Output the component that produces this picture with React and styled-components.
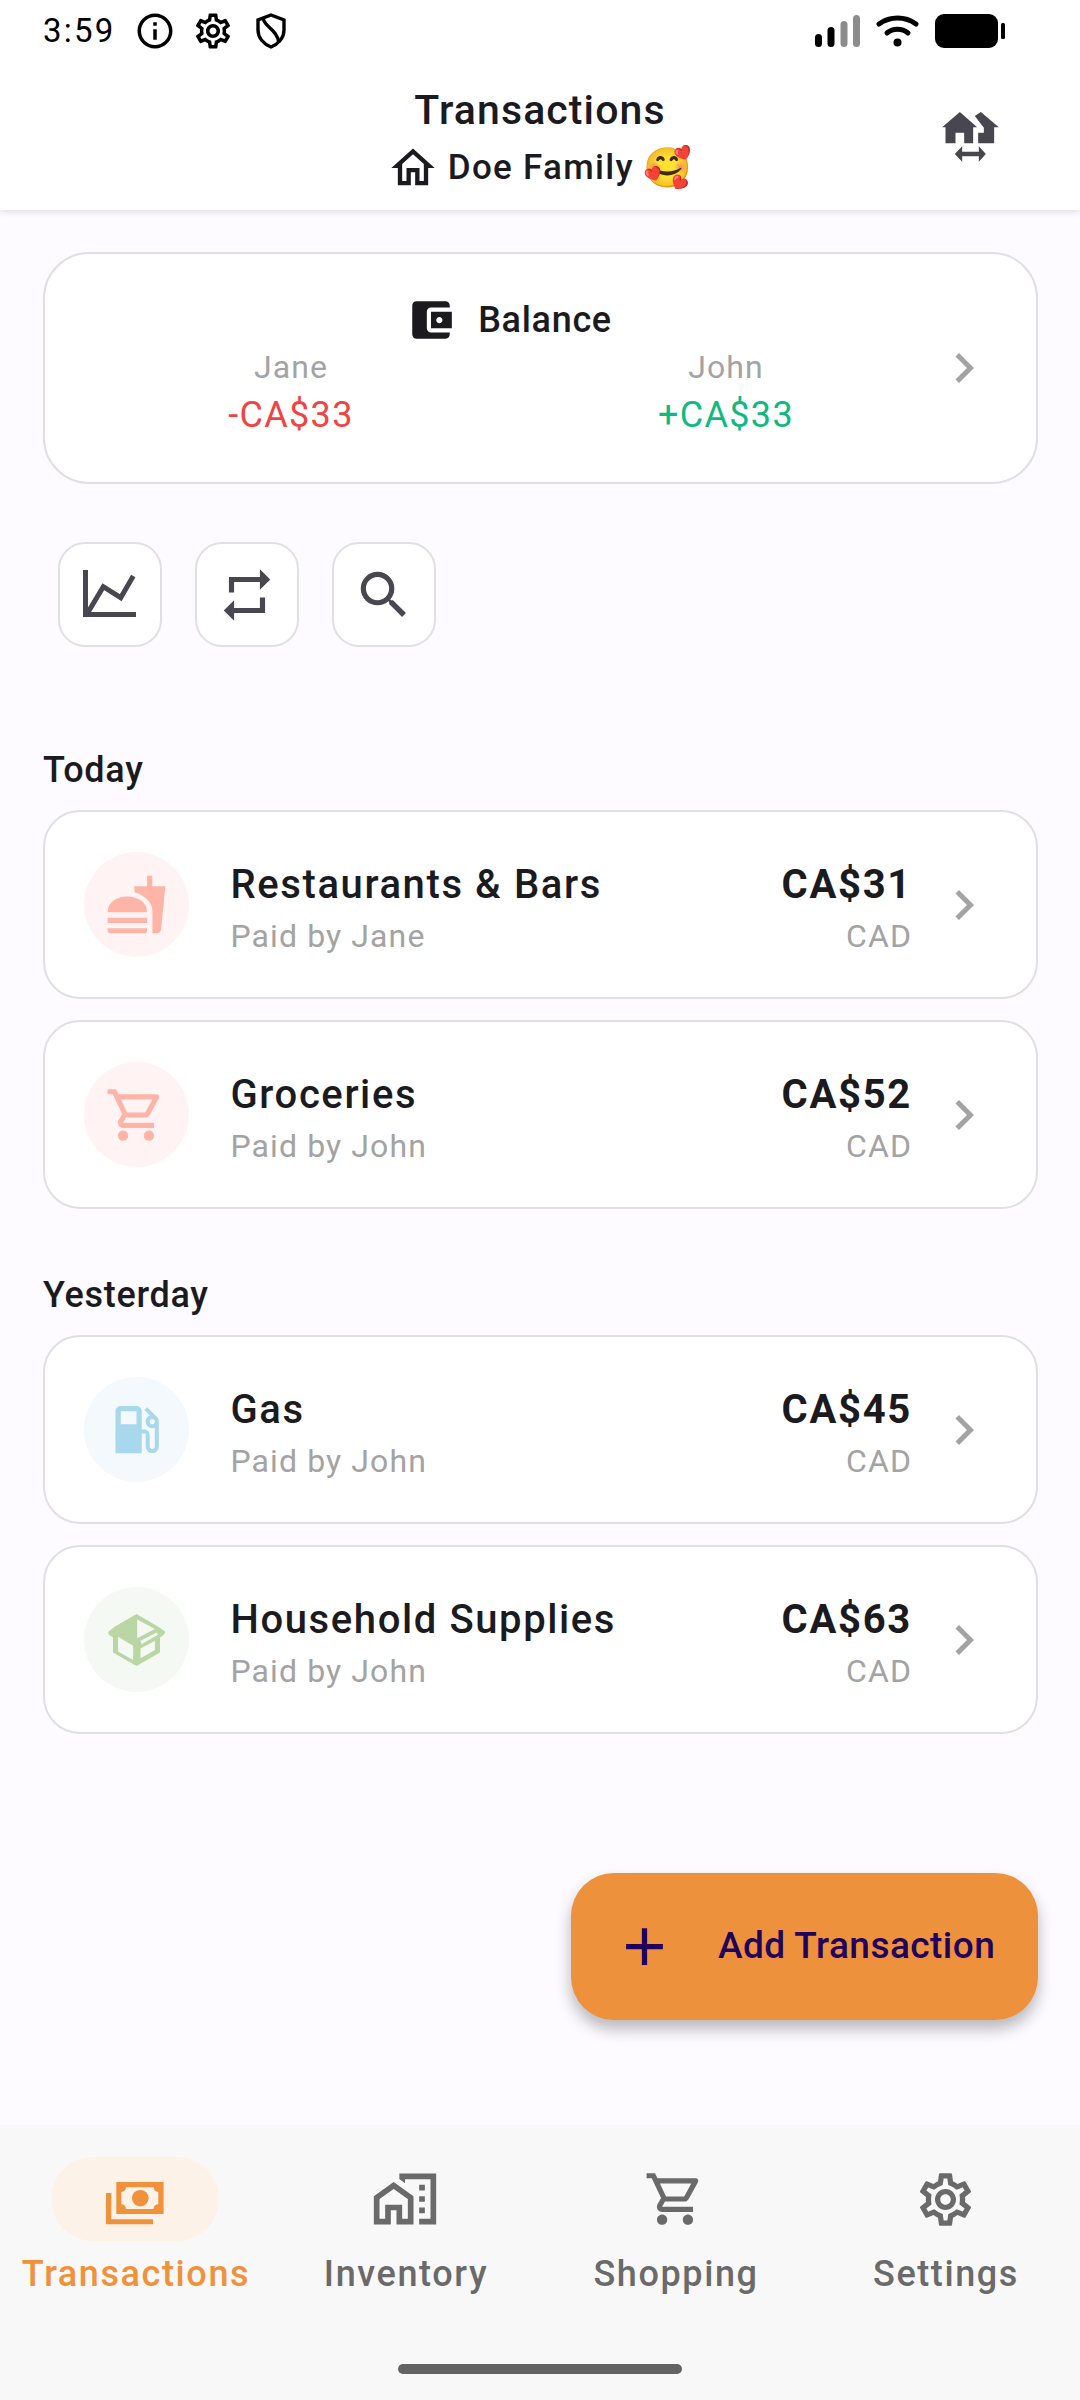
import React from "react";
import styled, { createGlobalStyle } from "styled-components";
import {
  MdAccountBalanceWallet, MdChevronRight, MdRepeat, MdSearch, MdFastfood,
  MdOutlineShoppingCart, MdLocalGasStation, MdOutlineHomeWork, MdOutlineSettings,
  MdOutlineHome, MdOutlineInfo, MdAdd,
} from "react-icons/md";

const Global = createGlobalStyle`
  html, body { margin: 0; padding: 0; background: #fdfbff; }
  * { box-sizing: border-box; }
  body { font-family: Roboto, "Noto Sans", sans-serif; }
`;

const Phone = styled.div`
  width: 1080px; height: 2400px; display: flex; flex-direction: column;
  position: relative; overflow: hidden; background: #fdfbff; color: #1b1b1f;
`;
const TopArea = styled.header`
  height: 210px; background: #fff; box-shadow: 0 2px 6px rgba(0,0,0,.12);
  display: flex; flex-direction: column; position: relative; z-index: 1;
`;
const StatusBar = styled.div`
  height: 62px; padding: 13px 75px 0 43px; display: flex; align-items: flex-start;
  justify-content: space-between; color: #000;
`;
const StatusGroup = styled.div`
  display: flex; align-items: center; gap: 16px; height: 36px;
`;
const Clock = styled.span`
  font-size: 33px; letter-spacing: 2.2px; margin-right: 3px; line-height: 36px;
`;
const TitleRow = styled.div`
  flex: 1; display: flex; align-items: flex-start; justify-content: center; position: relative;
`;
const TitleBlock = styled.div`
  display: flex; flex-direction: column; align-items: center; padding-top: 24.5px;
`;
const Title = styled.div`
  font-size: 41px; line-height: 46px; letter-spacing: 1.1px; font-weight: 470;
`;
const Family = styled.div`
  display: flex; align-items: center; font-size: 35px; font-weight: 470; line-height: 46px;
  letter-spacing: 1.3px; margin-top: 9px; gap: 9px;
`;
const Emoji = styled.span`
  font-size: 39px; line-height: 46px;
`;
const SwapButton = styled.div`
  position: absolute; right: 80px; top: 45px; width: 60px; height: 60px;
  display: flex; align-items: center; justify-content: center; color: #48464f;
`;
const Main = styled.main`
  flex: 1; padding: 42px 42px 0 43px; display: flex; flex-direction: column;
`;
const BalanceCard = styled.div`
  height: 232px; padding-top: 41px; position: relative; border-radius: 46px;
  background: #fff; border: 2.5px solid #e0e0e2;
`;
const BalanceHead = styled.div`
  display: flex; align-items: center; justify-content: center; gap: 22px;
  font-size: 36px; font-weight: 470; line-height: 48px; padding-right: 63px; letter-spacing: .7px;
`;
const BalanceCols = styled.div`
  display: grid; grid-template-columns: 290px 290px; column-gap: 145px;
  padding-left: 101px; margin-top: 2px;
`;
const BalanceCol = styled.div`
  display: flex; flex-direction: column; align-items: center;
`;
const PersonName = styled.div`
  font-size: 32px; line-height: 40px; color: #a3a3a3; letter-spacing: 1.1px;
`;
const Amount = styled.div`
  font-size: 36px; line-height: 48px; margin-top: 4px; color: ${p => p.$color}; letter-spacing: 1.3px;
`;
const Chevron = styled.div`
  position: absolute; right: 42px; top: 50%; transform: translateY(-50%);
  color: #a3a3a3; display: flex;
`;
const Tools = styled.div`
  display: flex; gap: 33px; margin: 58px 0 0 15px;
`;
const ToolButton = styled.div`
  width: 104px; height: 105px; background: #fff; border: 2.5px solid #e0e0e2; border-radius: 27px;
  display: flex; align-items: center; justify-content: center; color: #48464f;
`;
const SectionLabel = styled.div`
  font-size: 36px; font-weight: 470; line-height: 46px; letter-spacing: .7px;
  margin-top: ${p => p.$top}px; margin-bottom: 17.5px;
`;
const RowList = styled.div`
  display: flex; flex-direction: column; gap: 21px;
`;
const Row = styled.div`
  height: 189px; display: flex; align-items: center; padding-left: 38.5px; position: relative;
  background: #fff; border: 2.5px solid #e0e0e2; border-radius: 37px;
`;
const IconCircle = styled.div`
  width: 105px; height: 105px; border-radius: 50%; flex: none; background: ${p => p.$bg};
  color: ${p => p.$fg}; display: flex; align-items: center; justify-content: center;
`;
const RowText = styled.div`
  margin-left: 42px; flex: 1; display: flex; flex-direction: column; padding-top: 6px;
`;
const RowTitle = styled.div`
  font-size: 40px; font-weight: 470; line-height: 50px; letter-spacing: 1.6px;
`;
const RowSub = styled.div`
  font-size: 32px; line-height: 40px; color: #a3a3a3; letter-spacing: 1.1px; margin-top: 6px;
`;
const RowAmount = styled.div`
  display: flex; flex-direction: column; align-items: flex-end; margin-right: 124px; padding-top: 6px;
`;
const Price = styled.div`
  font-size: 40px; font-weight: 700; line-height: 50px; letter-spacing: 1.7px;
`;
const Currency = styled.div`
  font-size: 32px; line-height: 40px; color: #a3a3a3; letter-spacing: 1.1px; margin-top: 6px;
`;
const Fab = styled.div`
  position: absolute; left: 571px; top: 1873px; width: 467px; height: 147px; border-radius: 43px;
  background: #ee913c; color: #21005d; display: flex; align-items: center; padding-left: 42px;
  box-shadow: 0 9px 16px rgba(0,0,0,.28); z-index: 2;
`;
const FabLabel = styled.span`
  font-size: 37px; font-weight: 470; margin-left: 42px; letter-spacing: .45px; padding-bottom: 3px;
`;
const NavBar = styled.nav`
  height: 275px; background: #f8f8f8; display: grid; grid-template-columns: repeat(4, 270px);
  position: relative;
`;
const NavItem = styled.div`
  display: flex; flex-direction: column; align-items: center; padding-top: 32px;
  color: ${p => p.$active ? "#f0913c" : "#6a6a6a"};
`;
const NavIconPill = styled.div`
  width: 168px; height: 84px; border-radius: 42px; display: flex; align-items: center;
  justify-content: center; background: ${p => p.$active ? "#fdf2e7" : "transparent"};
`;
const NavLabel = styled.div`
  font-size: 36px; font-weight: 470; line-height: 46px; letter-spacing: 1.6px; margin-top: 10px;
  padding-left: 2px;
`;
const HomeBar = styled.div`
  position: absolute; left: 398px; top: 239px; width: 284px; height: 10px; border-radius: 5px;
  background: #636363;
`;

const ChartIcon = () => (
  <svg width="56" height="56" viewBox="0 0 56 56" fill="none" stroke="currentColor" strokeWidth="5">
    <path d="M3.5 3V47.5H54" />
    <path d="M5 47 L21.3 19.7 L38.7 30.7 L51.3 9" />
  </svg>
);
const SwapHomes = () => (
  <svg width="57" height="50" viewBox="487 338 170 150" fill="currentColor">
    <path d="M540 338 L592 384 H580 V432 H553 V400 H527 V432 H497 V384 H487 Z" />
    <path d="M595 400 H612 V385 L585 350 L603 338 L657 384 H643 V432 H595 Z" />
    <path d="M525 464 L547 441 V457 H597 V441 L618 464 L597 487 V471 H547 V487 Z" />
  </svg>
);
const ShieldIcon = () => (
  <svg width="42" height="36" viewBox="-6 0 42 36" fill="none" stroke="#000" strokeWidth="3.4">
    <path d="M15 2 L28 7 V17 C28 25 22 31 15 34 C8 31 2 25 2 17 V7Z" />
    <path d="M7 5 C9 15 21 16 23 30" />
  </svg>
);
const SignalIcon = () => (
  <svg width="45" height="32" viewBox="0 0 45 32">
    <rect x="0" y="19" width="7" height="13" rx="3.5" fill="#000" />
    <rect x="12.5" y="12" width="7" height="20" rx="3.5" fill="#000" />
    <rect x="25.5" y="6" width="7" height="26" rx="3.5" fill="#8c8c8c" />
    <rect x="38" y="0" width="7" height="32" rx="3.5" fill="#8c8c8c" />
  </svg>
);
const WifiIcon = () => (
  <svg width="43" height="32" viewBox="0 0 43 32" fill="none" stroke="#000" strokeWidth="5" strokeLinecap="round">
    <path d="M3 9 C14 1 29 1 40 9" />
    <path d="M11 18 C17 13 26 13 32 18" />
    <circle cx="21.5" cy="27.5" r="4" fill="#000" stroke="none" />
  </svg>
);
const BatteryIcon = () => (
  <svg width="70" height="34" viewBox="0 0 70 34">
    <rect x="0" y="0" width="63" height="34" rx="9" fill="#000" />
    <rect x="66" y="9" width="4" height="16" rx="1.5" fill="#000" />
  </svg>
);
const CashIcon = () => (
  <svg width="58" height="60" viewBox="0 -13 58 60" fill="currentColor">
    <path fillRule="evenodd" d="M10.3 0H57.6V32H10.3Z M20 5.3 H47.6 C47.6 8 49.6 10 52.3 10 V22.3 C49.6 22.3 47.6 24.3 47.6 27 H20 C20 24.3 18 22.3 15.3 22.3 V10 C18 10 20 8 20 5.3Z" />
    <circle cx="34.3" cy="16.2" r="8.3" />
    <path d="M0 11H5.3V37.3H47V42.3H0Z" />
  </svg>
);
const BoxIcon = () => (
  <svg width="57" height="52" viewBox="25 40 170 155" fill="currentColor">
    <path fillRule="evenodd" d="M110 40 L175 78 L195 92 Q197 97 190 103 L180 110 V155 L110 195 L40 155 V110 L30 103 Q23 97 27 92 L45 78 Z M112 56 L165 85 L112 112 Z M55 108 L100 135 V177 L55 152 Z M122 143 L165 120 V147 L122 172 Z M122 120 L170 95 L174 102 L125 130 Z" />
  </svg>
);

const rows = {
  today: [
    { title: "Restaurants & Bars", by: "Paid by Jane", price: "CA$31", bg: "#fff4f3", fg: "#ffb4a8", icon: <MdFastfood size={63} /> },
    { title: "Groceries", by: "Paid by John", price: "CA$52", bg: "#fff4f3", fg: "#ffb4a8", icon: <MdOutlineShoppingCart size={62} /> },
  ],
  yesterday: [
    { title: "Gas", by: "Paid by John", price: "CA$45", bg: "#f3f9fc", fg: "#a8d8ec", icon: <MdLocalGasStation size={63} /> },
    { title: "Household Supplies", by: "Paid by John", price: "CA$63", bg: "#f5f9f3", fg: "#b9d6a4", icon: <BoxIcon /> },
  ],
};

const TxRow = ({ r }) => (
  <Row>
    <IconCircle $bg={r.bg} $fg={r.fg}>{r.icon}</IconCircle>
    <RowText>
      <RowTitle>{r.title}</RowTitle>
      <RowSub>{r.by}</RowSub>
    </RowText>
    <RowAmount>
      <Price>{r.price}</Price>
      <Currency>CAD</Currency>
    </RowAmount>
    <Chevron><MdChevronRight size={60} /></Chevron>
  </Row>
);

export default function App() {
  return (
    <Phone>
      <Global />
      <TopArea>
        <StatusBar>
          <StatusGroup>
            <Clock>3:59</Clock>
            <MdOutlineInfo size={42} />
            <MdOutlineSettings size={42} />
            <ShieldIcon />
          </StatusGroup>
          <StatusGroup>
            <SignalIcon />
            <WifiIcon />
            <BatteryIcon />
          </StatusGroup>
        </StatusBar>
        <TitleRow>
          <TitleBlock>
            <Title>Transactions</Title>
            <Family>
              <MdOutlineHome size={52} />
              <span>Doe Family</span>
              <Emoji>🥰</Emoji>
            </Family>
          </TitleBlock>
          <SwapButton><SwapHomes /></SwapButton>
        </TitleRow>
      </TopArea>
      <Main>
        <BalanceCard>
          <BalanceHead>
            <MdAccountBalanceWallet size={50} />
            <span>Balance</span>
          </BalanceHead>
          <BalanceCols>
            <BalanceCol>
              <PersonName>Jane</PersonName>
              <Amount $color="#ef4444">-CA$33</Amount>
            </BalanceCol>
            <BalanceCol>
              <PersonName>John</PersonName>
              <Amount $color="#10b981">+CA$33</Amount>
            </BalanceCol>
          </BalanceCols>
          <Chevron><MdChevronRight size={60} /></Chevron>
        </BalanceCard>
        <Tools>
          <ToolButton><ChartIcon /></ToolButton>
          <ToolButton><MdRepeat size={62} /></ToolButton>
          <ToolButton><MdSearch size={62} /></ToolButton>
        </Tools>
        <SectionLabel $top={99.5}>Today</SectionLabel>
        <RowList>{rows.today.map(r => <TxRow key={r.title} r={r} />)}</RowList>
        <SectionLabel $top={62.5}>Yesterday</SectionLabel>
        <RowList>{rows.yesterday.map(r => <TxRow key={r.title} r={r} />)}</RowList>
      </Main>
      <Fab>
        <MdAdd size={63} />
        <FabLabel>Add Transaction</FabLabel>
      </Fab>
      <NavBar>
        <NavItem $active>
          <NavIconPill $active><CashIcon /></NavIconPill>
          <NavLabel>Transactions</NavLabel>
        </NavItem>
        <NavItem>
          <NavIconPill><MdOutlineHomeWork size={68} /></NavIconPill>
          <NavLabel>Inventory</NavLabel>
        </NavItem>
        <NavItem>
          <NavIconPill><MdOutlineShoppingCart size={62} /></NavIconPill>
          <NavLabel>Shopping</NavLabel>
        </NavItem>
        <NavItem>
          <NavIconPill><MdOutlineSettings size={63} /></NavIconPill>
          <NavLabel>Settings</NavLabel>
        </NavItem>
        <HomeBar />
      </NavBar>
    </Phone>
  );
}
